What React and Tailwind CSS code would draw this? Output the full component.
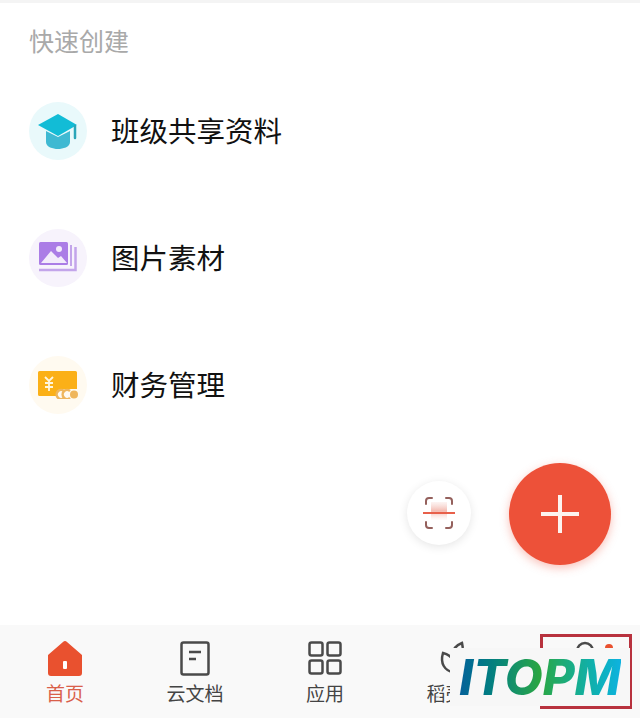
import React from 'react';

const cjk = { fontFamily: '"Noto Sans CJK SC", sans-serif' };

const CapIcon = () => (
    <svg width="42" height="38" viewBox="0 0 42 38">
        <path d="M9 19v11c0 5 7 7 12 7s12-2 12-7V19l-12 6z" fill="#3fb9d2" />
        <path d="M1 13 21 2l19 11-19 11z" fill="#12bcd6" />
        <path d="M38 14v12" stroke="#2aa5b8" strokeWidth="2.5" strokeLinecap="round" />
    </svg>
);

const PhotoIcon = () => (
    <svg width="38" height="32" viewBox="0 0 38 32">
        <rect x="0" y="0" width="29" height="23" rx="1.5" fill="#ab7de6" />
        <circle cx="20" cy="7" r="3" fill="#f3ecfb" />
        <path d="M2 21 12 9l7 7 3-2 6 7z" fill="#f3ecfb" />
        <path d="M32 3v21" stroke="#c3a5ea" strokeWidth="2" />
        <path d="M36.500 5v23H0" stroke="#c3a5ea" strokeWidth="2.500" fill="none" />
    </svg>
);

const MoneyIcon = () => (
    <svg width="40" height="28" viewBox="0 0 40 28">
        <path d="M0 1.500A1.500 1.500 0 0 1 1.500 0h36A1.500 1.500 0 0 1 39 1.500V18H24a6 6 0 0 0-6 6v1H1.500A1.500 1.500 0 0 1 0 23.500z" fill="#fbb017" />
        <path d="M7 6l4 4 4-4M11 10v10M7 12h8M7 16h8" stroke="#fff6df" strokeWidth="1.800" fill="none" />
        <path d="M26 20a4.500 4.500 0 1 0 0 7M32 20a4.500 4.500 0 1 0 0 7" stroke="#efb65c" strokeWidth="2.500" fill="none" />
        <circle cx="36" cy="23.500" r="4" fill="#efb65c" />
    </svg>
);

const ScanIcon = () => (
    <svg width="34" height="34" viewBox="0 0 34 34" fill="none">
        <defs>
            <linearGradient id="scanGlow" x1="0" y1="0" x2="0" y2="1">
                <stop offset="0" stopColor="#f4c8c0" stopOpacity="0.2" />
                <stop offset="0.5" stopColor="#f0a89c" stopOpacity="0.8" />
                <stop offset="1" stopColor="#fbe0db" stopOpacity="0.1" />
            </linearGradient>
        </defs>
        <rect x="9" y="6" width="16" height="18" fill="url(#scanGlow)" />
        <path d="M4 8V5a3 3 0 0 1 3-3h3M24 2h3a3 3 0 0 1 3 3v3M4 26v3a3 3 0 0 0 3 3h3M24 32h3a3 3 0 0 0 3-3v-3" stroke="#94605c" strokeWidth="2" strokeLinecap="round" />
        <path d="M1 17h32" stroke="#e8604a" strokeWidth="2" />
    </svg>
);

const HomeIcon = () => (
    <svg width="34" height="35" viewBox="0 0 34 35">
        <path d="M0 14 15 1a3 3 0 0 1 4 0l15 13v18a3 3 0 0 1-3 3H3a3 3 0 0 1-3-3z" fill="#e9512f" />
        <rect x="15" y="20" width="4" height="8" rx="1" fill="#fff" />
    </svg>
);

const DocIcon = () => (
    <svg width="30" height="35" viewBox="0 0 30 35" fill="none" stroke="#4a4a4a" strokeWidth="2.500">
        <rect x="1.500" y="1.500" width="27" height="32" rx="2" />
        <path d="M9 11h12M9 18h7" />
    </svg>
);

const GridIcon = () => (
    <svg width="34" height="34" viewBox="0 0 34 34" fill="none" stroke="#4a4a4a" strokeWidth="2.500">
        <rect x="1.500" y="1.500" width="13" height="13" rx="2" />
        <rect x="19.500" y="1.500" width="13" height="13" rx="2" />
        <rect x="1.500" y="19.500" width="13" height="13" rx="2" />
        <rect x="19.500" y="19.500" width="13" height="13" rx="2" />
    </svg>
);

const SproutIcon = () => (
    <svg width="34" height="35" viewBox="0 0 34 35" fill="none" stroke="#4a4a4a" strokeWidth="2.500">
        <path d="M17 32C6 30 2 22 5 12c4 1 8 3 10 7M17 32c8-2 13-9 11-20-4 0-8 2-10 6" />
        <path d="M15 13c0-5 4-9 9-11 1 3 1 6 0 9" />
    </svg>
);

const PersonIcon = () => (
    <svg width="34" height="35" viewBox="0 0 34 35" fill="none" stroke="#4a4a4a" strokeWidth="2.500">
        <circle cx="17" cy="10" r="8" />
        <path d="M2 33c1-9 7-13 15-13s14 4 15 13" />
    </svg>
);

const rows = [
    { label: '班级共享资料', bg: 'bg-[#e9f9fb]', icon: <CapIcon /> },
    { label: '图片素材', bg: 'bg-[#f7f3fc]', icon: <PhotoIcon /> },
    { label: '财务管理', bg: 'bg-[#fffaf0]', icon: <MoneyIcon /> },
];

const tabs = [
    { id: 'home', label: '首页', icon: <HomeIcon />, active: true },
    { id: 'docs', label: '云文档', icon: <DocIcon /> },
    { id: 'apps', label: '应用', icon: <GridIcon /> },
    { id: 'shop', label: '稻壳儿', icon: <SproutIcon /> },
    { id: 'me', icon: <PersonIcon />, dot: true },
];

export default function App() {
    return (
        <div className="relative h-[718px] w-[640px] overflow-hidden bg-white flex flex-col" style={cjk}>
            <div className="h-[3px] bg-[#f4f4f4] shrink-0" />

            <div className="flex-1 px-[29px]">
                <h2 className="mt-[19px] h-[36px] text-[25px] leading-[36px] font-normal text-[#a9a9a9]">快速创建</h2>

                <div className="mt-[44px] flex flex-col gap-[69px]">
                    {rows.map((row) => (
                        <div key={row.label} className="flex items-center gap-[24px] h-[58px]">
                            <div className={`w-[58px] h-[58px] rounded-full flex items-center justify-center shrink-0 ${row.bg}`}>
                                {row.icon}
                            </div>
                            <span className="pb-[2px] text-[28.500px] leading-none text-[#111]">{row.label}</span>
                        </div>
                    ))}
                </div>
            </div>

            {/* Bottom tabs */}
            <div className="h-[93px] shrink-0 bg-[#f9f9f9] flex">
                {tabs.map((tab) => (
                    <div key={tab.id} className="w-[130px] shrink-0 flex flex-col items-center pt-[16px]">
                        <div className="relative h-[35px]">
                            {tab.icon}
                            {tab.dot && <span className="absolute -right-[11px] top-[3px] w-[8px] h-[8px] rounded-full bg-[#e9512f]" />}
                        </div>
                        {tab.label && (
                            <span className={`mt-[3px] text-[19px] leading-[28px] ${tab.active ? 'text-[#d9604a]' : 'text-[#444]'}`}>{tab.label}</span>
                        )}
                    </div>
                ))}
            </div>

            {/* Floating buttons */}
            <div className="absolute left-[407px] top-[481px] w-[64px] h-[64px] rounded-full bg-white shadow-[0_2px_10px_rgba(0,0,0,0.10)] flex items-center justify-center">
                <ScanIcon />
            </div>
            <div className="absolute left-[509px] top-[463px] w-[102px] h-[102px] rounded-full bg-[#ed5139] shadow-[0_3px_10px_rgba(237,81,57,0.35)] flex items-center justify-center">
                <svg width="38" height="38" viewBox="0 0 38 38">
                    <path d="M19 0v38M0 19h38" stroke="#fdf3ef" strokeWidth="4" />
                </svg>
            </div>

            {/* Watermark and highlight box */}
            <div className="absolute left-[540px] top-[634px] w-[92px] h-[75px] border-[3px] border-[#b8323e]" />
            <div className="absolute left-[450px] top-[648px] w-[180px] h-[58px] bg-[#f7f7f7] flex items-center justify-center">
                <span
                    className="text-[49px] leading-none font-extrabold italic text-transparent bg-clip-text bg-gradient-to-r from-[#07609a] via-[#2aa63f] to-[#0fb2e0]"
                    style={{ fontFamily: 'Inter, sans-serif' }}
                >
                    ITOPM
                </span>
            </div>
        </div>
    );
}
